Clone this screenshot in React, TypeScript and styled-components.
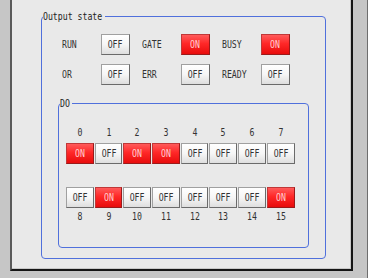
import React from "react";
import styled, { createGlobalStyle } from "styled-components";

const Global = createGlobalStyle`
  html, body { margin: 0; padding: 0; background: #c6c6c6; }
  body { width: 381px; height: 278px; overflow: hidden; }
`;

const FONT = `"DejaVu Sans Mono", "Liberation Mono", monospace`;

const Screen = styled.div`
  display: flex;
  width: 381px;
  height: 278px;
  background: #c6c6c6;
  font-family: ${FONT};
  font-size: 10px;
  color: #333;
`;

const Panel = styled.div`
  box-sizing: border-box;
  margin-left: 10px;
  width: 343px;
  height: 271px;
  background: #e9e9e9;
  border-left: 2px solid #5a5a5a;
  border-right: 2px solid #151515;
  border-bottom: 2px solid #151515;
  box-shadow: inset -1px -1px 0 #c8c8c8;
  padding: 16px 0 0 29px;
`;

const RightEdge = styled.div`
  margin-left: auto;
  display: flex;
  height: 100%;
`;

const EdgeLine = styled.div`
  width: 1px;
  background: #6e6e6e;
`;

const EdgeWhite = styled.div`
  width: 13px;
  background: #ffffff;
`;

const Group = styled.div<{ $w: number; $h: number }>`
  position: relative;
  box-sizing: border-box;
  width: ${(p) => p.$w}px;
  height: ${(p) => p.$h}px;
  border: 1px solid #5070dc;
  border-radius: 4px;
`;

const Txt = styled.span<{ $origin?: string }>`
  display: inline-block;
  transform: scaleX(0.82);
  transform-origin: ${(p) => p.$origin ?? "center"};
  white-space: nowrap;
`;

const Legend = styled.span<{ $w: number }>`
  position: absolute;
  top: -6px;
  left: 1px;
  width: ${(p) => p.$w}px;
  line-height: 11px;
  background: #e9e9e9;
  color: #222;
`;

const OutputBody = styled.div`
  padding: 17px 0 0 16px;
`;

const Rows = styled.div`
  display: flex;
  flex-direction: column;
  gap: 9px;
  padding-left: 4px;
`;

const Row = styled.div`
  display: flex;
`;

const Item = styled.div`
  display: flex;
  align-items: center;
  width: 80px;
`;

const Label = styled.span`
  width: 39px;
  color: #333;
`;

const Btn = styled.div<{ $on: boolean; $w: number }>`
  box-sizing: border-box;
  width: ${(p) => p.$w}px;
  height: 21px;
  display: flex;
  align-items: center;
  justify-content: center;
  border: 1px solid ${(p) => (p.$on ? "#c03838" : "#a0a0a0")};
  border-bottom-color: ${(p) => (p.$on ? "#9a1a1a" : "#6a6a6a")};
  border-right-color: ${(p) => (p.$on ? "#9a1a1a" : "#6a6a6a")};
  background: ${(p) =>
    p.$on
      ? "linear-gradient(#ff5a5a 0%, #ff2828 45%, #e80c0c 100%)"
      : "linear-gradient(#ffffff 0%, #f6f6f6 50%, #dedede 100%)"};
  color: ${(p) => (p.$on ? "#ffd0d0" : "#333")};
`;

const DoWrap = styled.div`
  margin-top: 18px;
`;

const DoBody = styled.div`
  padding: 24px 0 0 7px;
  display: flex;
  flex-direction: column;
`;

const Grid = styled.div<{ $mt: number }>`
  display: grid;
  grid-template-columns: repeat(8, 27.7px);
  column-gap: 1px;
  margin-top: ${(p) => p.$mt}px;
`;

const Num = styled.span`
  height: 10px;
  line-height: 10px;
  text-align: center;
  color: #333;
`;

const rows: [string, boolean][][] = [
  [
    ["RUN", false],
    ["GATE", true],
    ["BUSY", true],
  ],
  [
    ["OR", false],
    ["ERR", false],
    ["READY", false],
  ],
];

const do1 = [true, false, true, true, false, false, false, false];
const do2 = [false, true, false, false, false, false, false, true];

export default function App() {
  return (
    <>
      <Global />
      <Screen>
        <Panel>
          <Group $w={285} $h={243}>
            <Legend $w={62}>
              <Txt $origin="left">Output state</Txt>
            </Legend>
            <OutputBody>
              <Rows>
                {rows.map((r, i) => (
                  <Row key={i}>
                    {r.map(([name, on]) => (
                      <Item key={name}>
                        <Label>
                          <Txt $origin="left">{name}</Txt>
                        </Label>
                        <Btn $on={on} $w={29}>
                          <Txt>{on ? "ON" : "OFF"}</Txt>
                        </Btn>
                      </Item>
                    ))}
                  </Row>
                ))}
              </Rows>
              <DoWrap>
                <Group $w={251} $h={145}>
                  <Legend $w={12}>
                    <Txt $origin="left">DO</Txt>
                  </Legend>
                  <DoBody>
                    <Grid $mt={0}>
                      {do1.map((_, i) => (
                        <Num key={i}>
                          <Txt>{i}</Txt>
                        </Num>
                      ))}
                    </Grid>
                    <Grid $mt={5}>
                      {do1.map((on, i) => (
                        <Btn key={i} $on={on} $w={27.7}>
                          <Txt>{on ? "ON" : "OFF"}</Txt>
                        </Btn>
                      ))}
                    </Grid>
                    <Grid $mt={23}>
                      {do2.map((on, i) => (
                        <Btn key={i} $on={on} $w={27.7}>
                          <Txt>{on ? "ON" : "OFF"}</Txt>
                        </Btn>
                      ))}
                    </Grid>
                    <Grid $mt={4}>
                      {do2.map((_, i) => (
                        <Num key={i}>
                          <Txt>{i + 8}</Txt>
                        </Num>
                      ))}
                    </Grid>
                  </DoBody>
                </Group>
              </DoWrap>
            </OutputBody>
          </Group>
        </Panel>
        <RightEdge>
          <EdgeLine />
          <EdgeWhite />
        </RightEdge>
      </Screen>
    </>
  );
}
